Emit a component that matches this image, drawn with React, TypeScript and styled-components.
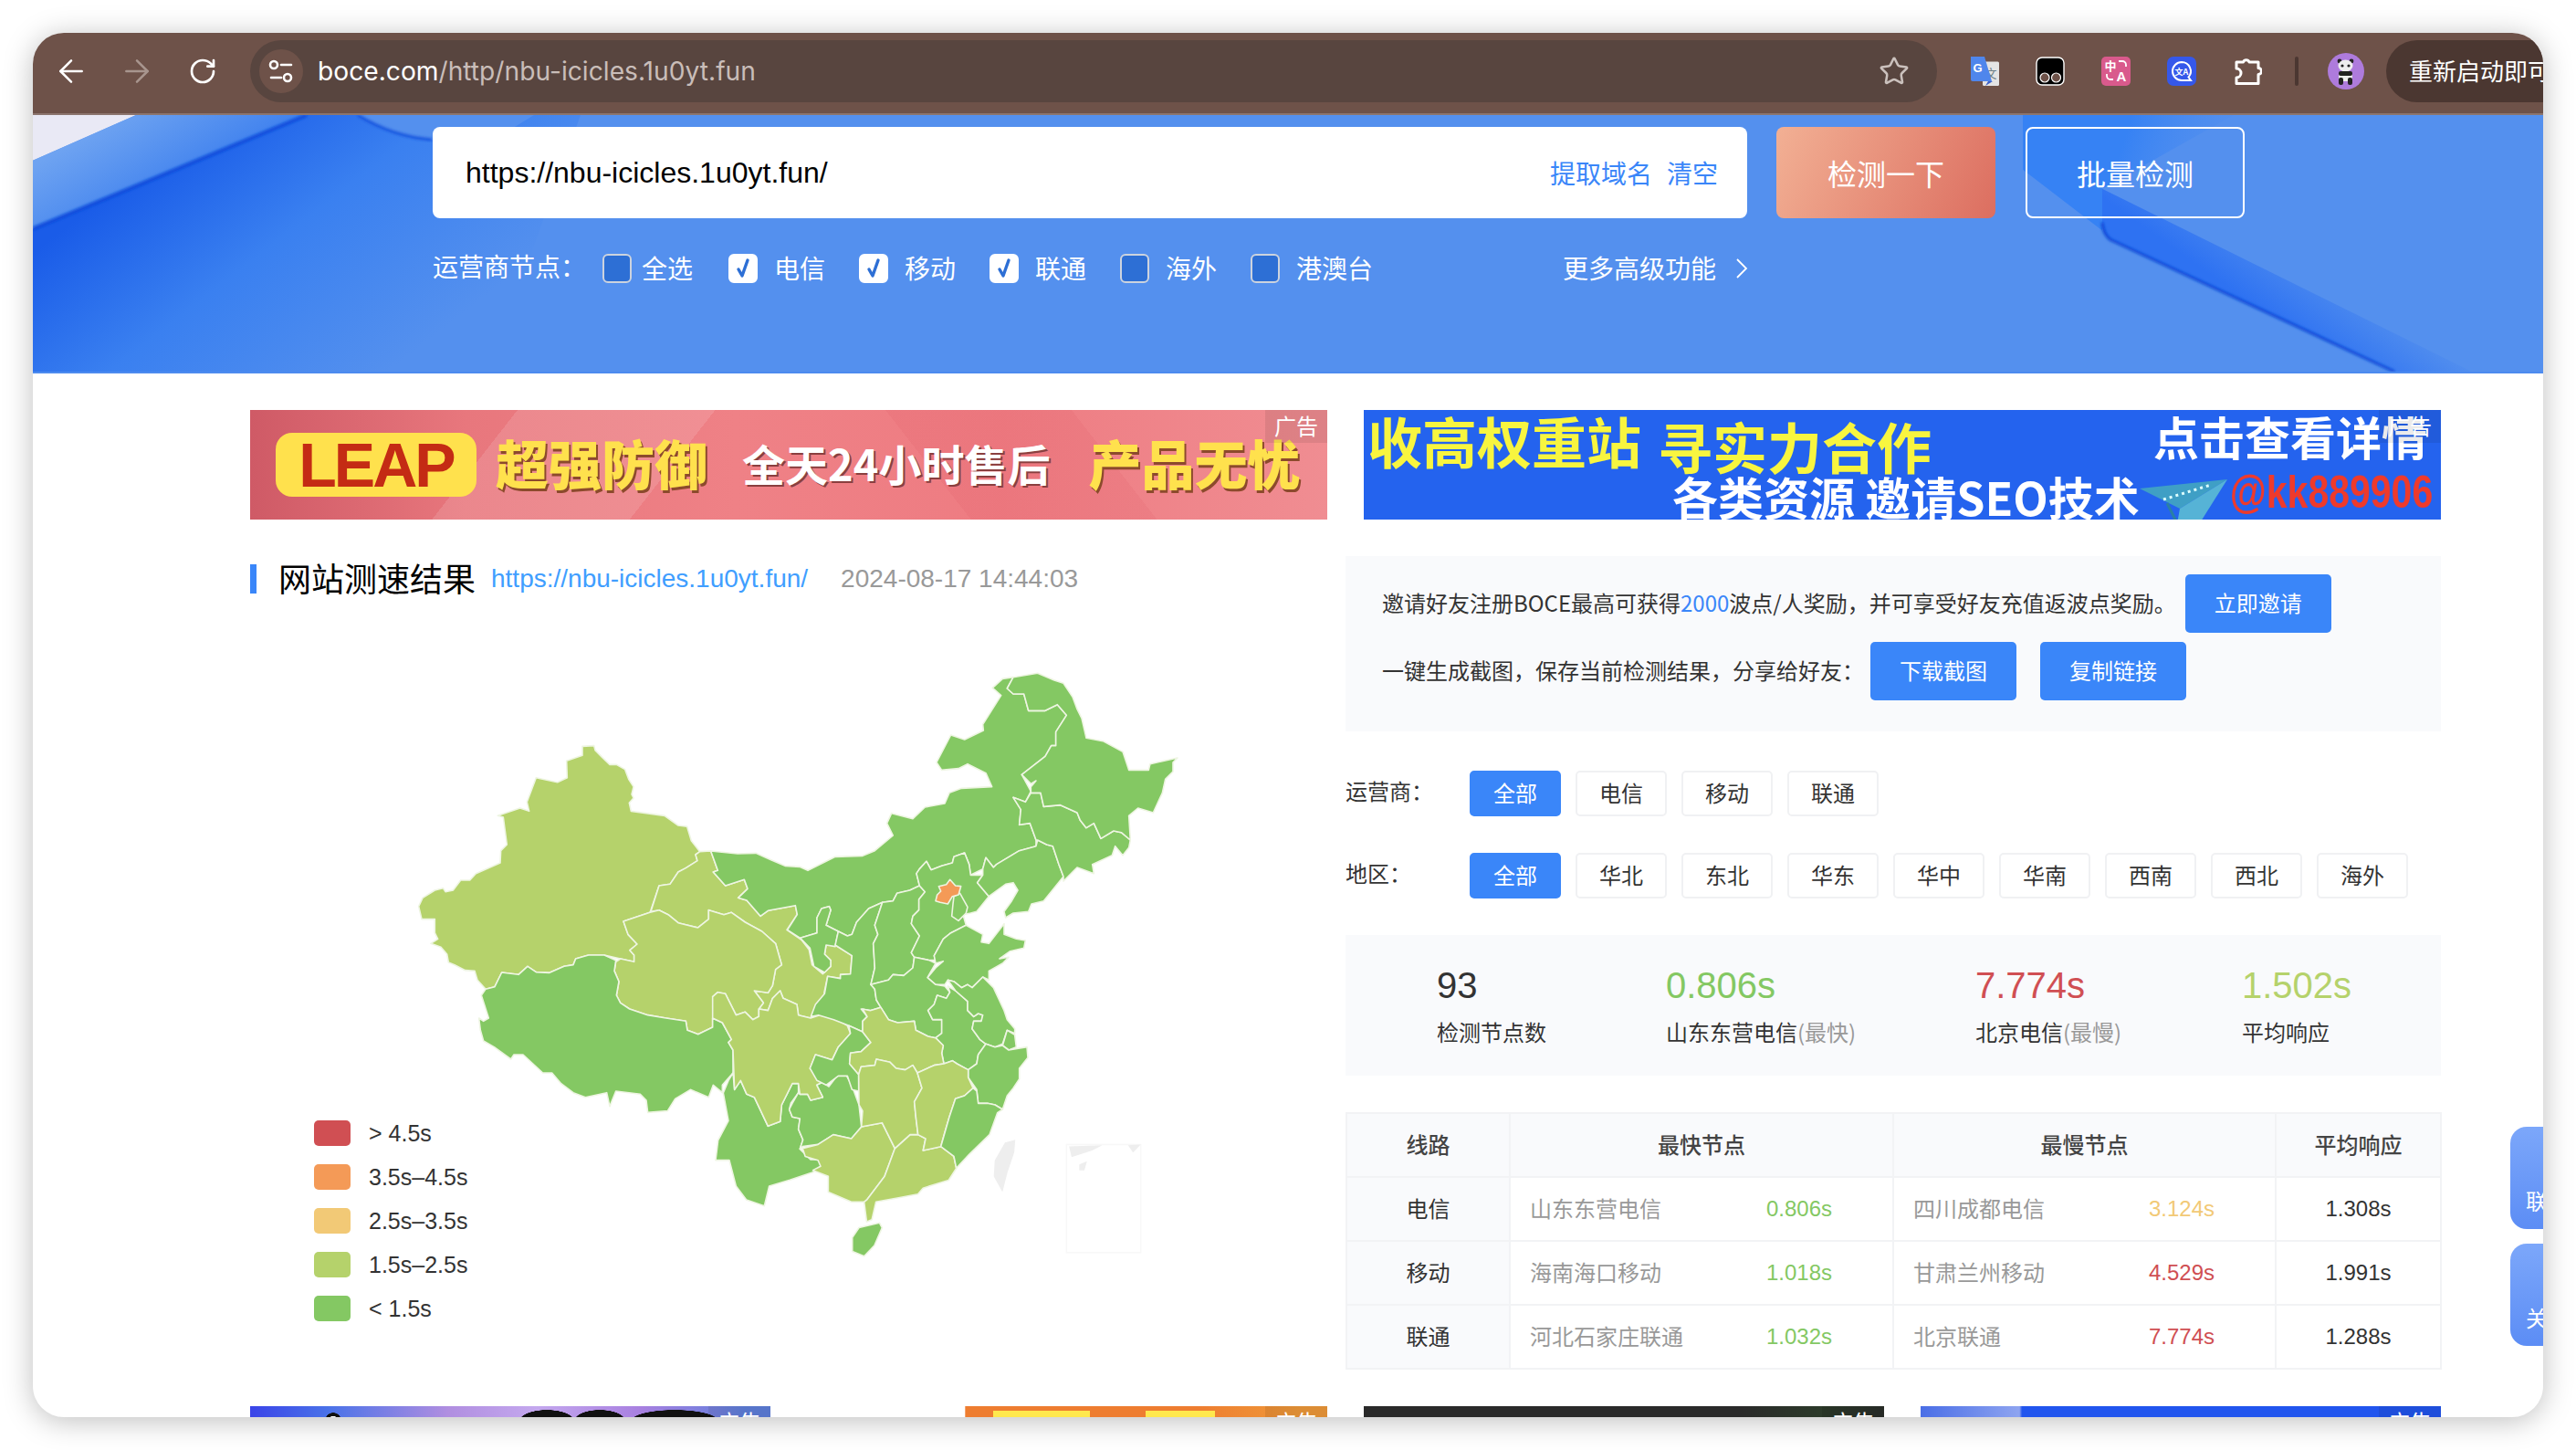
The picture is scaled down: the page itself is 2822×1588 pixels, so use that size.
import React from "react";
import styled, { createGlobalStyle } from "styled-components";
import { ArrowLeft, ArrowRight, RotateCw, Star } from "lucide-react";

const SANS = `"Liberation Sans", "Noto Sans CJK SC", sans-serif`;
const UI = `Inter, "Noto Sans CJK SC", sans-serif`;
const CJK = `"Noto Sans CJK SC", "Liberation Sans", sans-serif`;

const GREEN = "#84c863";
const LIME = "#b5d26b";
const AMBER = "#f2c976";
const ORANGE = "#f49a57";
const RED = "#d04f53";
const BLUE = "#3a86f9";

const Global = createGlobalStyle`
  html, body { margin: 0; padding: 0; background: #fff; overflow: hidden; }
  body { font-family: ${SANS}; }
  * { box-sizing: border-box; }
`;

const Desktop = styled.div`
  width: 2822px;
  height: 1588px;
  padding: 36px;
`;
const Win = styled.div`
  position: relative;
  width: 100%;
  height: 100%;
  border-radius: 34px;
  overflow: hidden;
  background: #fff;
  box-shadow: 0 4px 32px rgba(0, 0, 0, 0.26);
  display: flex;
  flex-direction: column;
`;

/* ---------- browser toolbar ---------- */
const Toolbar = styled.div`
  flex: none;
  height: 90px;
  background: #6e5249;
  border-bottom: 2px solid #8b756e;
  padding: 0 0 4px 6px;
  display: flex;
  align-items: center;
  color: #fff;
`;
const NavCell = styled.div<{ $dim?: boolean }>`
  flex: none;
  width: 72px;
  height: 48px;
  display: flex;
  align-items: center;
  justify-content: center;
  color: ${(p) => (p.$dim ? "#a8958e" : "#fff")};
`;
const Address = styled.div`
  flex: none;
  margin-left: 16px;
  width: 1848px;
  height: 68px;
  border-radius: 34px;
  background: #58453f;
  display: flex;
  align-items: center;
  padding: 0 30px 0 10px;
`;
const Chip = styled.div`
  flex: none;
  width: 48px;
  height: 48px;
  border-radius: 50%;
  background: #6e5249;
`;
const UrlText = styled.div`
  margin-left: 16px;
  font-family: ${UI};
  font-size: 28.2px;
  color: #c9bdb9;
  white-space: nowrap;
`;
const UrlHost = styled.span`
  color: #fff;
`;
const StarWrap = styled.div`
  margin-left: auto;
  color: #cbc1bd;
  display: flex;
`;
const ExtCell = styled.div`
  flex: none;
  width: 72px;
  height: 48px;
  display: flex;
  align-items: center;
  justify-content: center;
`;
const Extensions = styled.div`
  flex: none;
  margin-left: 16px;
  display: flex;
`;
const Sep = styled.div`
  flex: none;
  margin-left: 16px;
  width: 4px;
  height: 32px;
  border-radius: 2px;
  background: #4b3731;
`;
const Avatar = styled.div`
  flex: none;
  margin-left: 32px;
  width: 40px;
  height: 40px;
`;
const Pill = styled.div`
  flex: none;
  margin-left: 24px;
  width: 300px;
  height: 68px;
  border-radius: 34px 0 0 34px;
  background: #4b3731;
  padding: 0 0 3px 25px;
  display: flex;
  align-items: center;
  font-family: ${CJK};
  font-size: 26px;
  color: #fff;
  white-space: nowrap;
`;

/* ---------- hero ---------- */
const Hero = styled.div`
  flex: none;
  position: relative;
  height: 283px;
  background: #5490ee;
  border-bottom: 2px solid #4d8bef;
  overflow: hidden;
`;
const HeroArt = styled.svg`
  position: absolute;
  inset: 0;
  width: 100%;
  height: 100%;
`;
const HeroBody = styled.div`
  position: relative;
  padding: 13px 0 0 438px;
`;
const SearchRow = styled.div`
  display: flex;
  align-items: stretch;
  height: 100px;
`;
const SearchBox = styled.div`
  width: 1440px;
  border-radius: 8px;
  background: #fff;
  padding: 0 32px 0 36px;
  display: flex;
  align-items: center;
  justify-content: space-between;
`;
const SearchText = styled.div`
  font-family: ${SANS};
  font-size: 32px;
  color: #000;
`;
const SearchLinks = styled.div`
  display: flex;
  gap: 16px;
  font-family: ${CJK};
  font-size: 28px;
  color: ${BLUE};
`;
const BaseAction = styled.div`
  width: 240px;
  border-radius: 8px;
  display: flex;
  align-items: center;
  justify-content: center;
  font-family: ${CJK};
  font-size: 32px;
  color: #fff;
`;
const PrimaryAction = styled(BaseAction)`
  margin-left: 32px;
  background: linear-gradient(115deg, #f2b094, #dc6e60);
`;
const GhostAction = styled(BaseAction)`
  margin-left: 33px;
  border: 2px solid #fff;
`;
const OptionRow = styled.div`
  margin-top: 39px;
  height: 32px;
  display: flex;
  align-items: center;
  font-family: ${CJK};
  font-size: 28px;
  color: #fff;
`;
const OptionLabel = styled.div`
  width: 186px;
  flex: none;
  margin-top: -6px;
`;
const OptionList = styled.div`
  display: flex;
  gap: 37px;
`;
const Option = styled.div`
  display: flex;
  align-items: center;
  gap: 18px;
  &:first-child {
    gap: 11px;
    margin-right: 2px;
  }
`;
const OptionText = styled.span`
  margin-top: -3px;
`;
const Box = styled.span<{ $on?: boolean }>`
  flex: none;
  width: 32px;
  height: 32px;
  border-radius: 6px;
  border: 2px solid ${(p) => (p.$on ? "#fff" : "#ccd3de")};
  background: ${(p) => (p.$on ? "#fff" : "#2d6fd5")};
  display: flex;
  align-items: center;
  justify-content: center;
`;
const More = styled.div`
  margin-left: 208px;
  display: flex;
  align-items: center;
  gap: 21px;
`;

/* ---------- page ---------- */
const Content = styled.div`
  flex: 1;
  padding: 40px 0 0 238px;
  overflow: hidden;
`;
const AdRow = styled.div`
  display: flex;
  width: 2400px;
`;
const LeapAd = styled.div`
  position: relative;
  flex: none;
  width: 1180px;
  height: 120px;
  display: flex;
  align-items: center;
  padding-left: 28px;
  font-family: ${CJK};
  overflow: hidden;
  background:
    linear-gradient(128deg, transparent 23%, rgba(255, 255, 255, 0.12) 23%, rgba(255, 255, 255, 0.12) 40%, transparent 40%),
    linear-gradient(52deg, transparent 62%, rgba(214, 70, 85, 0.1) 62%, rgba(214, 70, 85, 0.1) 78%, transparent 78%),
    linear-gradient(90deg, #cf5a66 0%, #e8777d 20%, #ef8186 45%, #ee7c82 70%, #f08d92 100%);
`;
const LeapPill = styled.div`
  flex: none;
  width: 220px;
  height: 70px;
  border-radius: 18px;
  background: #ffe14d;
  display: flex;
  align-items: center;
  justify-content: center;
  font-family: ${SANS};
  font-weight: 700;
  font-size: 68px;
  letter-spacing: -3px;
  color: #c42b14;
`;
const LeapBig = styled.div<{ $ml: number }>`
  flex: none;
  margin: -6px 0 0 ${(p) => p.$ml}px;
  font-size: 58px;
  font-weight: 900;
  line-height: 1;
  color: #ffe14d;
  text-shadow: 2px 3px 0 #8c4a2c;
  white-space: nowrap;
`;
const LeapMid = styled.div`
  flex: none;
  margin: -5px 0 0 38px;
  font-size: 47px;
  font-weight: 700;
  line-height: 1;
  color: #fff;
  text-shadow: 2px 2px 0 #8a3f3f;
  white-space: nowrap;
`;
const AdTag = styled.span`
  position: absolute;
  top: 0;
  right: 0;
  width: 68px;
  height: 36px;
  padding-bottom: 4px;
  background: rgba(0, 0, 0, 0.08);
  display: flex;
  align-items: center;
  justify-content: center;
  font-family: ${CJK};
  font-size: 24px;
  font-weight: 400;
  color: #fff;
  text-shadow: none;
`;
const SeoAd = styled.div`
  position: relative;
  flex: none;
  margin-left: 40px;
  width: 1180px;
  height: 120px;
  background: #2463ee;
  overflow: hidden;
  font-family: ${CJK};
  font-weight: 700;
  display: flex;
  flex-direction: column;
  padding-top: 3px;
`;
const SeoTop = styled.div`
  flex: none;
  height: 66px;
  display: flex;
  align-items: flex-start;
  padding-left: 4px;
  white-space: nowrap;
`;
const SeoYellow = styled.div<{ $ml: number; $mt: number }>`
  margin-left: ${(p) => p.$ml}px;
  margin-top: ${(p) => p.$mt}px;
  font-size: 60px;
  line-height: 1;
  color: #f8f53f;
`;
const SeoWhiteLink = styled.div`
  margin-left: 243px;
  margin-top: 0;
  font-size: 50px;
  line-height: 1;
  color: #fff;
`;
const SeoBottom = styled.div`
  flex: none;
  display: flex;
  align-items: flex-start;
  padding-left: 338px;
  white-space: nowrap;
`;
const SeoWhite = styled.div`
  font-size: 50px;
  line-height: 1;
  color: #fff;
`;
const SeoHandle = styled.div`
  margin: -8px 0 0 3px;
  font-family: ${SANS};
  font-size: 41px;
  line-height: 48px;
  color: #ee3a2c;
  transform: scaleY(1.2);
  transform-origin: top;
`;

const MainGrid = styled.div`
  margin-top: 40px;
  width: 2400px;
  display: flex;
  align-items: flex-start;
  gap: 20px;
`;
const LeftCol = styled.div`
  position: relative;
  flex: none;
  width: 1180px;
`;
const TitleRow = styled.div`
  margin-top: 9px;
  height: 32px;
  display: flex;
  align-items: center;
  white-space: nowrap;
`;
const TitleBar = styled.div`
  flex: none;
  width: 7px;
  height: 32px;
  background: ${BLUE};
`;
const TitleText = styled.div`
  margin: -5px 0 0 24px;
  font-family: ${CJK};
  font-size: 36px;
  color: #000;
`;
const TitleUrl = styled.div`
  margin: -1px 0 0 17px;
  font-size: 28px;
  color: #409eff;
`;
const TitleDate = styled.div`
  margin: -1px 0 0 36px;
  font-size: 28px;
  color: #999;
`;
const MapSvg = styled.svg`
  display: block;
  margin: 70px 0 0 176px;
  width: 880px;
  height: 680px;
`;
const Legend = styled.div`
  position: absolute;
  left: 70px;
  top: 618px;
  display: flex;
  flex-direction: column;
  gap: 20px;
`;
const LegendItem = styled.div`
  height: 28px;
  display: flex;
  align-items: center;
  gap: 20px;
  font-size: 25px;
  color: #333;
`;
const Swatch = styled.span<{ $c: string }>`
  width: 40px;
  height: 28px;
  border-radius: 5px;
  background: ${(p) => p.$c};
`;

const RightCol = styled.div`
  flex: none;
  width: 1200px;
`;
const InviteBox = styled.div`
  height: 192px;
  background: #f9fafc;
  padding: 20px 40px 0;
  display: flex;
  flex-direction: column;
  gap: 10px;
  font-family: ${CJK};
  font-size: 24px;
  color: #333;
`;
const InviteRow = styled.div`
  display: flex;
  align-items: center;
  height: 64px;
  white-space: nowrap;
`;
const InviteText = styled.span`
  margin-top: -4px;
`;
const Hi = styled.span`
  color: ${BLUE};
`;
const BlueBtn = styled.div<{ $ml: number }>`
  flex: none;
  margin-left: ${(p) => p.$ml}px;
  width: 160px;
  height: 64px;
  padding-bottom: 3px;
  border-radius: 5px;
  background: ${BLUE};
  color: #fff;
  display: flex;
  align-items: center;
  justify-content: center;
`;
const FilterRow = styled.div<{ $mt: number }>`
  margin-top: ${(p) => p.$mt}px;
  height: 50px;
  display: flex;
  align-items: center;
  font-family: ${CJK};
  font-size: 24px;
  color: #333;
`;
const FilterLabel = styled.div`
  flex: none;
  width: 136px;
  margin-top: -7px;
`;
const FilterList = styled.div`
  display: flex;
  gap: 16px;
`;
const FilterBtn = styled.div<{ $on?: boolean }>`
  width: 100px;
  height: 50px;
  padding-bottom: 4px;
  border-radius: 5px;
  border: 2px solid ${(p) => (p.$on ? BLUE : "#f0f1f3")};
  background: ${(p) => (p.$on ? BLUE : "#fff")};
  color: ${(p) => (p.$on ? "#fff" : "#333")};
  display: flex;
  align-items: center;
  justify-content: center;
`;
const Stats = styled.div`
  margin-top: 40px;
  height: 154px;
  background: #f9fafc;
  padding: 31px 0 0 100px;
  display: grid;
  grid-template-columns: 251px 339px 292px 1fr;
`;
const StatCol = styled.div`
  display: flex;
  flex-direction: column;
  gap: 11px;
`;
const StatValue = styled.div<{ $c: string }>`
  font-size: 40px;
  line-height: 48px;
  color: ${(p) => p.$c};
`;
const StatLabel = styled.div`
  font-family: ${CJK};
  font-size: 24px;
  line-height: 32px;
  color: #333;
`;
const Muted = styled.span`
  color: #999;
`;
const Table = styled.table`
  margin-top: 40px;
  width: 1199px;
  table-layout: fixed;
  border-collapse: collapse;
  font-family: ${SANS}, ${CJK};
  font-size: 24px;
  color: #333;
`;
const Th = styled.th`
  height: 70px;
  padding: 0 0 4px;
  border: 2px solid #f2f3f5;
  background: #f9fafc;
  font-family: ${CJK};
  font-weight: 500;
  color: #444;
`;
const Td = styled.td`
  height: 70px;
  padding: 0;
  border: 2px solid #f2f3f5;
  text-align: center;
`;
const RowHead = styled(Td)`
  padding-bottom: 3px;
  background: #f9fafc;
  font-family: ${CJK};
`;
const CellRow = styled.div`
  display: flex;
  align-items: center;
  justify-content: space-between;
  padding: 0 66px 0 21px;
`;
const NodeName = styled.span`
  margin-top: -3px;
  font-family: ${CJK};
  color: #999;
`;
const Speed = styled.span<{ $c: string }>`
  color: ${(p) => p.$c};
`;

const BottomAds = styled.div`
  margin-top: 40px;
  width: 2400px;
  display: grid;
  grid-template-columns: 570px 570px 570px 570px;
  column-gap: 40px;
`;
const BottomAd = styled.div<{ $bg: string }>`
  position: relative;
  height: 120px;
  background: ${(p) => p.$bg};
  overflow: hidden;
`;

const SideTab = styled.div<{ $top: number }>`
  position: absolute;
  right: -60px;
  top: ${(p) => p.$top}px;
  width: 96px;
  height: 112px;
  border-radius: 18px 0 0 18px;
  background: linear-gradient(180deg, #7ca7fa, #5c8df5);
  padding: 0 0 16px 17px;
  display: flex;
  align-items: flex-end;
  font-family: ${CJK};
  font-size: 24px;
  line-height: 30px;
  color: #fff;
  white-space: nowrap;
`;

/* ---------- drawings ---------- */
type Prov = { p: string; c: string };
const WEST: Prov[] = [
  { c: LIME, p: "540 52 578 50 582 65 605 88 630 112 652 112 680 128 692 160 708 185 702 210 708 222 694 238 700 265 810 280 855 312 884 316 898 362 926 398 912 408 918 428 880 452 855 465 828 505 792 510 765 590 762 598 675 627 690 670 720 702 696 722 710 738 710 760 665 750 612 738 560 738 518 750 510 770 480 775 432 796 388 794 360 775 330 802 275 795 252 842 222 850 195 820 186 790 155 788 120 770 100 762 95 735 75 712 42 700 65 685 55 665 55 620 12 620 2 578 15 550 55 525 82 518 90 530 115 525 140 492 170 492 190 470 270 435 272 395 292 375 280 285 262 280 335 255 365 265 358 235 388 155 458 170 490 155 488 100 540 82" },
  { c: LIME, p: "926 398 962 396 985 460 970 465 1010 510 1072 490 1083 520 1052 550 1080 558 1125 610 1150 592 1240 575 1246 604 1212 655 1260 688 1285 720 1295 770 1330 800 1356 775 1356 755 1336 735 1341 705 1371 705 1426 740 1421 800 1388 802 1388 815 1346 808 1335 860 1335 885 1310 925 1290 945 1250 935 1245 900 1200 880 1190 855 1165 880 1150 920 1120 915 1135 895 1105 855 1150 862 1165 838 1175 785 1195 770 1175 700 1130 660 1075 630 1030 598 1005 605 955 590 955 620 920 648 855 632 822 605 792 590 765 595 792 510 828 505 855 465 880 452 918 428 912 408" },
  { c: LIME, p: "675 627 762 598 792 590 822 605 855 632 920 648 955 620 955 590 1005 605 1030 598 1075 630 1130 660 1175 700 1195 770 1175 785 1165 838 1150 862 1105 855 1135 895 1120 915 1120 940 1100 950 1075 925 1045 935 1010 865 985 860 968 875 980 905 968 945 968 975 920 998 885 985 880 955 815 945 755 935 695 915 665 895 652 870 660 825 645 790 650 760 665 750 710 760 710 738 696 722 720 702 690 670" },
  { c: GREEN, p: "222 850 252 842 275 795 330 802 360 775 388 794 432 796 480 775 510 770 518 750 560 738 612 738 650 755 645 790 660 825 652 870 665 895 695 915 755 935 815 945 880 955 885 985 920 998 968 975 968 945 1000 960 1030 1015 1020 1025 1035 1050 1035 1125 1000 1165 1000 1190 970 1165 955 1205 895 1180 845 1210 820 1250 755 1255 750 1215 730 1195 650 1185 630 1235 620 1190 550 1205 510 1190 470 1160 440 1125 410 1125 345 1065 315 1065 305 1080 250 1040 215 1020 205 985 200 945 215 955 232 945 208 870" },
  { c: GREEN, p: "1035 1125 1040 1180 1060 1150 1080 1195 1105 1205 1150 1300 1190 1285 1195 1230 1230 1160 1250 1160 1250 1190 1225 1225 1220 1245 1230 1270 1255 1275 1250 1310 1265 1345 1255 1375 1290 1410 1320 1410 1323 1432 1298 1451 1222 1477 1154 1497 1138 1562 1079 1542 1045 1497 1023 1412 978 1412 986 1347 1020 1282 1003 1191 1020 1150" },
  { c: GREEN, p: "1230 1225 1250 1190 1255 1195 1280 1195 1290 1215 1330 1205 1310 1165 1330 1155 1350 1170 1380 1130 1407 1132 1425 1165 1449 1230 1457 1302 1424 1341 1365 1328 1314 1360 1264 1367 1255 1375 1265 1345 1250 1310 1255 1275 1230 1270 1220 1245" },
  { c: LIME, p: "968 945 968 875 985 860 1010 865 1045 935 1075 925 1100 950 1120 940 1120 915 1150 920 1165 880 1190 855 1200 880 1245 900 1250 935 1290 945 1320 935 1370 945 1411 970 1421 995 1381 1040 1361 1082 1306 1065 1288 1110 1305 1130 1330 1155 1310 1165 1330 1205 1290 1215 1280 1195 1255 1195 1250 1160 1230 1160 1195 1230 1190 1285 1150 1300 1105 1205 1080 1195 1060 1150 1040 1180 1035 1050 1020 1025 1030 1015 1000 960" },
];
const EAST: Prov[] = [
  { c: GREEN, p: "-214 606 -126 615 -66 613 -16 635 30 655 78 658 105 670 195 625 285 622 325 605 385 555 365 515 380 482 450 500 490 462 555 450 570 415 610 400 710 395 690 350 630 320 600 335 545 340 528 315 575 225 620 240 682 210 680 190 740 95 712 70 745 40 780 35 760 72 780 90 815 90 830 145 885 145 925 125 955 160 920 215 920 260 905 260 885 295 808 355 838 410 820 445 780 430 805 470 800 520 835 515 855 570 855 590 800 605 725 650 715 660 690 628 680 665 640 685 635 650 620 612 585 625 580 645 545 655 510 668 495 640 472 665 462 680 472 720 440 735 398 745 385 770 350 775 305 795 265 840 250 880 235 885 205 870 165 850 180 800 175 788 150 795 135 825 135 875 80 892 38 865 70 815 64 785 -26 802 -51 820 -96 768 -124 760 -93 730 -104 700 -166 720 -206 675 -191 670" },
  { c: GREEN, p: "80 892 135 875 135 825 150 795 175 788 180 800 165 850 205 870 195 920 165 915 160 945 180 965 180 985 160 1005 125 985 112 925" },
  { c: GREEN, p: "205 870 235 885 250 880 265 840 305 795 350 775 325 850 335 880 320 910 325 990 312 1045 325 1060 330 1095 345 1120 310 1130 280 1125 300 1150 285 1165 285 1200 240 1180 190 1160 140 1145 115 1150 130 1110 160 1075 170 1018 212 1025 212 1012 245 1010 250 950 195 915" },
  { c: GREEN, p: "350 775 385 770 398 745 440 735 472 720 490 740 470 765 470 800 450 820 445 845 472 885 445 940 455 955 450 990 420 1015 385 1012 370 1030 312 1045 325 990 320 910 335 880 325 850" },
  { c: GREEN, p: "472 665 495 640 510 668 545 655 580 645 585 625 620 612 635 650 640 685 680 685 662 710 700 755 660 805 640 810 615 815 625 850 575 875 550 895 520 950 525 965 505 965 455 955 445 940 472 885 445 845 450 820 470 800 470 765 490 740 472 720 462 680" },
  { c: GREEN, p: "585 755 605 745 630 790 625 810 600 835 578 820 582 780" },
  { c: ORANGE, p: "572 700 590 720 608 722 600 750 580 755 565 780 540 775 525 770 530 750 542 738 535 722 560 716" },
  { c: GREEN, p: "680 665 690 628 715 660 725 650 800 605 855 590 860 570 890 585 910 590 930 650 945 690 880 770 840 780 830 805 780 810 755 825 750 805 775 770 795 735 780 710 755 715 700 755 662 710 680 685" },
  { c: GREEN, p: "780 430 820 445 838 415 870 415 880 460 935 455 990 480 1000 505 1020 530 1045 515 1068 565 1110 540 1135 545 1165 570 1160 595 1140 620 1115 590 1105 620 1040 650 1045 680 990 660 945 705 945 690 930 650 910 590 890 585 860 570 855 570 835 515 800 520 805 470" },
  { c: GREEN, p: "780 35 860 22 915 45 945 55 975 100 990 140 1005 170 1020 235 1075 245 1140 280 1160 340 1225 340 1230 320 1320 300 1305 315 1305 345 1280 370 1270 415 1240 480 1190 465 1160 490 1165 570 1135 545 1110 540 1068 565 1045 515 1020 530 1000 505 990 480 935 455 880 460 870 415 838 415 838 395 855 375 838 385 808 355 885 295 905 260 920 260 920 215 955 160 925 125 885 145 830 145 815 90 780 90 760 72" },
  { c: GREEN, p: "520 950 550 895 575 875 625 850 680 880 675 905 700 910 750 845 750 880 790 895 820 900 815 925 770 935 735 960 765 955 745 975 700 1000 700 1030 680 1020 645 1055 630 1045 610 1055 585 1035 565 1030 555 1045 525 1045 498 1022 525 990 550 968 525 975" },
  { c: GREEN, p: "312 1045 370 1030 385 1012 420 1015 450 990 455 955 505 965 525 975 498 1022 525 1045 555 1050 572 1070 560 1090 530 1080 520 1110 500 1130 515 1160 545 1160 545 1205 525 1220 500 1215 460 1195 455 1165 400 1170 370 1160 345 1120 330 1095 325 1060" },
  { c: GREEN, p: "520 1110 530 1080 560 1090 572 1070 565 1050 590 1065 630 1100 630 1130 650 1150 665 1140 680 1145 675 1165 650 1165 645 1190 670 1225 690 1240 665 1275 660 1305 632 1325 595 1305 580 1295 552 1305 545 1270 550 1245 525 1220 545 1205 545 1160 515 1160 500 1130" },
  { c: GREEN, p: "565 1030 585 1035 610 1055 630 1045 645 1055 680 1020 715 1055 750 1130 760 1160 785 1190 785 1205 760 1195 745 1240 720 1250 690 1240 670 1225 645 1190 650 1165 675 1165 680 1145 665 1140 650 1150 630 1130 630 1100 590 1065" },
  { c: GREEN, p: "760 1195 785 1210 790 1250 765 1260 745 1245" },
  { c: GREEN, p: "690 1240 720 1250 745 1245 765 1260 825 1250 828 1285 800 1320 800 1355 780 1385 760 1410 745 1455 720 1440 695 1435 665 1435 660 1390 632 1350 632 1325 660 1305 665 1275" },
  { c: GREEN, p: "245 1205 240 1180 285 1200 312 1235 280 1265 245 1270 242 1305 272 1340 272 1395 250 1390 235 1345 205 1345 165 1375 135 1360 112 1320 130 1275 185 1292 205 1250" },
  { c: LIME, p: "285 1125 310 1130 345 1120 370 1160 400 1170 455 1165 460 1195 500 1215 525 1220 550 1245 545 1270 552 1305 520 1310 465 1335 450 1310 425 1325 395 1320 375 1300 330 1290 325 1310 280 1315 272 1340 242 1305 245 1270 280 1265 312 1235 285 1200 285 1165 300 1150" },
  { c: LIME, p: "280 1315 325 1310 330 1290 375 1300 395 1320 425 1325 450 1310 465 1335 480 1385 455 1430 460 1480 467 1538 441 1538 391 1583 349 1499 281 1512 285 1460 273 1440 272 1340" },
  { c: LIME, p: "465 1335 520 1310 552 1305 580 1295 595 1305 632 1325 632 1350 648 1385 620 1410 590 1420 570 1480 555 1530 542 1577 484 1590 492 1551 467 1538 460 1480 455 1430 480 1385" },
  { c: GREEN, p: "648 1385 660 1395 665 1435 695 1435 720 1440 745 1455 728 1466 702 1538 635 1603 593 1648 585 1609 542 1577 559 1518 570 1480 590 1420 620 1410" },
];
const SOUTH: Prov[] = [
  { c: LIME, p: "765 1240 795 1230 825 1205 860 1215 880 1185 920 1175 945 1240 925 1310 890 1370 885 1375 860 1375 815 1350 815 1310 785 1295 800 1285 795 1270 770 1260" },
  { c: LIME, p: "945 1240 975 1205 990 1205 1005 1215 1000 1245 1035 1235 1060 1260 1065 1290 1050 1320 1000 1340 990 1355 950 1365 908 1375 900 1420 890 1425 885 1375 890 1370 925 1310" },
  { c: GREEN, p: "875 1440 915 1428 920 1440 905 1485 885 1512 862 1500 862 1465" },
];

const ChinaMap = () => (
  <MapSvg viewBox="450 720 880 680" aria-hidden>
    <g transform="translate(450 720) scale(0.5612 0.4337)" fill="#eeeeee">
      <polygon points="1160 1225 1180 1218 1178 1250 1165 1300 1155 1350 1138 1310 1140 1270" />
      <rect x="1280" y="1230" width="145" height="273" fill="none" stroke="#f8f8f8" strokeWidth="1.5" vectorEffect="non-scaling-stroke" />
      <polygon points="1285 1235 1350 1232 1330 1245 1290 1262" />
      <polygon points="1400 1232 1425 1230 1410 1250" />
      <polygon points="1305 1280 1320 1272 1315 1295 1305 1295" />
    </g>
    <g stroke="#eef5e2" strokeWidth="1.6" strokeLinejoin="round">
      <g transform="translate(458 800) scale(0.33333)">
        {WEST.map((v, i) => <polygon key={i} points={v.p} fill={v.c} vectorEffect="non-scaling-stroke" />)}
      </g>
      <g transform="translate(450 720) scale(0.5612 0.4337)">
        {SOUTH.map((v, i) => <polygon key={i} points={v.p} fill={v.c} vectorEffect="non-scaling-stroke" />)}
      </g>
      <g transform="translate(850 730) scale(0.33333)">
        {EAST.map((v, i) => <polygon key={i} points={v.p} fill={v.c} vectorEffect="non-scaling-stroke" />)}
      </g>
    </g>
  </MapSvg>
);

const HeroDrawing = () => (
  <HeroArt viewBox="0 0 2750 282" preserveAspectRatio="none" aria-hidden>
    <defs>
      <linearGradient id="deep" gradientUnits="userSpaceOnUse" x1="130" y1="50" x2="340" y2="320">
        <stop offset="0" stopColor="#1a5ce8" />
        <stop offset="0.45" stopColor="#3a80f0" />
        <stop offset="1" stopColor="#5490ee" />
      </linearGradient>
      <linearGradient id="band" gradientUnits="userSpaceOnUse" x1="60" y1="20" x2="120" y2="120">
        <stop offset="0" stopColor="#6ea3f1" />
        <stop offset="1" stopColor="#3b7eee" />
      </linearGradient>
      <linearGradient id="slash" gradientUnits="userSpaceOnUse" x1="2420" y1="200" x2="2470" y2="130">
        <stop offset="0" stopColor="#2e72f2" />
        <stop offset="1" stopColor="#5490ee" />
      </linearGradient>
      <linearGradient id="wedge" gradientUnits="userSpaceOnUse" x1="2290" y1="30" x2="2380" y2="60">
        <stop offset="0" stopColor="#3682f4" />
        <stop offset="1" stopColor="#4a8bf0" stopOpacity="0.3" />
      </linearGradient>
      <filter id="soft" x="-10%" y="-10%" width="120%" height="120%">
        <feGaussianBlur stdDeviation="1.6" />
      </filter>
    </defs>
    <path d="M0 125 L300 0 L356 0 Q395 24 437 27 L505 27 L549 0 L600 0 L500 282 L0 282 Z" fill="url(#deep)" />
    <polygon points="0 0 113 0 0 50" fill="#e9e9f5" />
    <polygon points="113 0 300 0 0 125 0 50" fill="url(#band)" />
    <path d="M300 0 L0 125" stroke="#0d4bdb" strokeWidth="4" fill="none" filter="url(#soft)" />
    <path d="M356 0 Q395 24 437 27" stroke="#1352dd" strokeWidth="3" fill="none" filter="url(#soft)" />
    <polygon points="2180 0 2411 0 2267 81 2267 127 2180 60" fill="url(#wedge)" />
    <path d="M2267 81 L2672 282 L2587 282 L2276 137 Q2267 131 2267 118 Z" fill="url(#slash)" />
    <path d="M2267 118 Q2268 131 2276 137 L2587 282" stroke="#0b47d6" strokeWidth="3" fill="none" filter="url(#soft)" />
  </HeroArt>
);

const TuneIcon = () => (
  <svg width="48" height="48" viewBox="0 0 48 48" fill="none" stroke="#fff" strokeWidth="2.6" strokeLinecap="round">
    <circle cx="16" cy="17" r="4" />
    <path d="M24 17h11M13 31h11" />
    <circle cx="31" cy="31" r="4" />
  </svg>
);
const TranslateIcon = () => (
  <svg width="32" height="32" viewBox="0 0 32 32">
    <rect x="14" y="5.500" width="18" height="26.500" rx="1.500" fill="#e4e4e4" />
    <text x="23" y="23" textAnchor="middle" fontSize="13" fill="#6b7f86" fontFamily="Noto Sans CJK SC, sans-serif">文</text>
    <path d="M1 0h15l8 27H3a2 2 0 0 1-2-2z" fill="#4f86ec" />
    <path d="M20 27l-3 5 8-5z" fill="#3a5fc8" />
    <text x="8.500" y="17" textAnchor="middle" fontSize="13" fontWeight="700" fill="#fff" fontFamily="Liberation Sans, sans-serif">G</text>
  </svg>
);
const EyesIcon = () => (
  <svg width="32" height="32" viewBox="0 0 32 32">
    <rect x="1" y="1" width="30" height="30" rx="6" fill="#000" stroke="#fff" strokeWidth="1.4" />
    <circle cx="10" cy="23" r="5" fill="#6e5249" stroke="#fff" strokeWidth="1.200" />
    <circle cx="22.500" cy="23" r="5" fill="#6e5249" stroke="#fff" strokeWidth="1.200" />
  </svg>
);
const PinkIcon = () => (
  <svg width="32" height="32" viewBox="0 0 32 32">
    <rect width="32" height="32" rx="5" fill="#d95a8c" />
    <text x="10" y="15" textAnchor="middle" fontSize="13" fontWeight="700" fill="#fff" fontFamily="Noto Sans CJK SC, sans-serif">中</text>
    <text x="22" y="27" textAnchor="middle" fontSize="15" fontWeight="700" fill="#fff" fontFamily="Liberation Sans, sans-serif">A</text>
    <path d="M19 5h4a4 4 0 0 1 4 4v2M6 19v2a4 4 0 0 0 4 4h3" stroke="#fff" strokeWidth="1.800" fill="none" />
  </svg>
);
const BubbleIcon = () => (
  <svg width="32" height="32" viewBox="0 0 32 32">
    <rect width="32" height="32" rx="7" fill="#3558ea" />
    <path d="M16 6a10 10 0 1 0 0 20h10l-2.500-3.500A10 10 0 0 0 16 6z" fill="none" stroke="#fff" strokeWidth="2" />
    <text x="16" y="20" textAnchor="middle" fontSize="9" fontWeight="700" fill="#fff" fontFamily="Noto Sans CJK SC, sans-serif">文A</text>
  </svg>
);
const PuzzleIcon = () => (
  <svg width="32" height="32" viewBox="0 0 32 32" fill="none" stroke="#fff" strokeWidth="3" strokeLinejoin="round">
    <path d="M4 6H11.500a3.500 3.500 0 0 1 6.500 0H28V12.500a3.500 3.500 0 0 1 0 7V29.500H4V23a4.500 4.500 0 0 0 0-10z" />
  </svg>
);
const PandaIcon = () => (
  <svg width="40" height="40" viewBox="0 0 40 40">
    <circle cx="20" cy="20" r="20" fill="#ae7bdc" />
    <circle cx="13" cy="9" r="2.400" fill="#222" />
    <circle cx="26" cy="9" r="2.400" fill="#222" />
    <ellipse cx="19.500" cy="14" rx="8" ry="6.500" fill="#eee" />
    <circle cx="16" cy="14" r="1.600" fill="#222" />
    <circle cx="23" cy="14" r="1.600" fill="#222" />
    <rect x="12" y="20" width="15" height="11" rx="4" fill="#eee" />
    <rect x="12" y="20" width="15" height="5" rx="2" fill="#222" />
    <rect x="12" y="27" width="5" height="8" rx="2" fill="#222" />
    <rect x="22" y="27" width="5" height="8" rx="2" fill="#222" />
  </svg>
);
const Check = () => (
  <svg width="24" height="26" viewBox="0 0 24 26" fill="none" stroke="#2d6fd5" strokeWidth="3.400" strokeLinecap="round" strokeLinejoin="round">
    <path d="M7 14l4 7 6-17" />
  </svg>
);
const Chevron = () => (
  <svg width="14" height="22" viewBox="0 0 14 22" fill="none" stroke="#fff" strokeWidth="1.800">
    <path d="M2 1l10 10L2 21" />
  </svg>
);
const Plane = () => (
  <svg width="96" height="56" viewBox="0 0 96 56" style={{ flex: "none", marginTop: 5 }}>
    <polygon points="0 12 96 2 44 34" fill="#3f9fc5" />
    <polygon points="44 34 96 2 62 56 40 56" fill="#56b3d6" />
    <path d="M26 24L78 8" stroke="#dff" strokeWidth="3" strokeDasharray="3 4" />
    <path d="M30 28l14 28" stroke="#2a80a5" strokeWidth="3" />
  </svg>
);

const OPTS: [string, boolean][] = [["全选", false], ["电信", true], ["移动", true], ["联通", true], ["海外", false], ["港澳台", false]];
const LEGEND: [string, string][] = [[RED, "> 4.5s"], [ORANGE, "3.5s–4.5s"], [AMBER, "2.5s–3.5s"], [LIME, "1.5s–2.5s"], [GREEN, "< 1.5s"]];
const REGIONS = ["全部", "华北", "东北", "华东", "华中", "华南", "西南", "西北", "海外"];
const CARRIERS = ["全部", "电信", "移动", "联通"];
const ROWS = [
  { l: "电信", f: "山东东营电信", fv: "0.806s", fc: GREEN, s: "四川成都电信", sv: "3.124s", sc: AMBER, a: "1.308s" },
  { l: "移动", f: "海南海口移动", fv: "1.018s", fc: GREEN, s: "甘肃兰州移动", sv: "4.529s", sc: RED, a: "1.991s" },
  { l: "联通", f: "河北石家庄联通", fv: "1.032s", fc: GREEN, s: "北京联通", sv: "7.774s", sc: RED, a: "1.288s" },
];
const BOTTOM_ADS = [
  "radial-gradient(circle 9px at 91px 16px, #fff 55%, #111 60%, #111 95%, transparent 100%), radial-gradient(ellipse 30px 12px at 325px 16px, #111 97%, transparent 100%), radial-gradient(ellipse 28px 12px at 383px 16px, #111 97%, transparent 100%), radial-gradient(ellipse 48px 12px at 465px 16px, #111 97%, transparent 100%), linear-gradient(90deg, #3a44e8, #4a72e8 15%, #b08ee0 38%, #c4a8ee 55%, #a880e0 75%, #5f7fdc 95%)",
  "linear-gradient(#ffe84d, #ffe84d) 204px 5px / 106px 20px no-repeat, linear-gradient(#ffe84d, #ffe84d) 371px 5px / 76px 20px no-repeat, linear-gradient(90deg, #fff 30.3%, #ee7d30 30.5%, #ee7d30 75%, #ef9a3a 95%)",
  "linear-gradient(100deg, #2a2a2a 70%, #2c3a2a 85%, #2a2a2a)",
  "linear-gradient(90deg, #4a6ee6, #8ea4f0 19%, #2155ee 19.5%, #2155ee)",
];

export default function App() {
  return (
    <Desktop>
      <Global />
      <Win>
        <Toolbar>
          <NavCell><ArrowLeft size={40} strokeWidth={1.5} /></NavCell>
          <NavCell $dim><ArrowRight size={40} strokeWidth={1.5} /></NavCell>
          <NavCell><RotateCw size={32} strokeWidth={2} /></NavCell>
          <Address>
            <Chip><TuneIcon /></Chip>
            <UrlText><UrlHost>boce.com</UrlHost>/http/nbu-icicles.1u0yt.fun</UrlText>
            <StarWrap><Star size={34} strokeWidth={1.8} /></StarWrap>
          </Address>
          <Extensions>
            <ExtCell><TranslateIcon /></ExtCell>
            <ExtCell><EyesIcon /></ExtCell>
            <ExtCell><PinkIcon /></ExtCell>
            <ExtCell><BubbleIcon /></ExtCell>
            <ExtCell><PuzzleIcon /></ExtCell>
          </Extensions>
          <Sep />
          <Avatar><PandaIcon /></Avatar>
          <Pill>重新启动即可更新</Pill>
        </Toolbar>

        <Hero>
          <HeroDrawing />
          <HeroBody>
            <SearchRow>
              <SearchBox>
                <SearchText>https://nbu-icicles.1u0yt.fun/</SearchText>
                <SearchLinks><span>提取域名</span><span>清空</span></SearchLinks>
              </SearchBox>
              <PrimaryAction>检测一下</PrimaryAction>
              <GhostAction>批量检测</GhostAction>
            </SearchRow>
            <OptionRow>
              <OptionLabel>运营商节点：</OptionLabel>
              <OptionList>
                {OPTS.map(([t, on]) => (
                  <Option key={t}>
                    <Box $on={on}>{on && <Check />}</Box>
                    <OptionText>{t}</OptionText>
                  </Option>
                ))}
              </OptionList>
              <More><OptionText>更多高级功能</OptionText><Chevron /></More>
            </OptionRow>
          </HeroBody>
        </Hero>

        <Content>
          <AdRow>
            <LeapAd>
              <LeapPill>LEAP</LeapPill>
              <LeapBig $ml={21}>超强防御</LeapBig>
              <LeapMid>全天24小时售后</LeapMid>
              <LeapBig $ml={42}>产品无忧</LeapBig>
              <AdTag>广告</AdTag>
            </LeapAd>
            <SeoAd>
              <SeoTop>
                <SeoYellow $ml={0} $mt={0}>收高权重站</SeoYellow>
                <SeoYellow $ml={18} $mt={6}>寻实力合作</SeoYellow>
                <SeoWhiteLink>点击查看详情</SeoWhiteLink>
              </SeoTop>
              <SeoBottom>
                <SeoWhite>各类资源 邀请SEO技术</SeoWhite>
                <Plane />
                <SeoHandle>@kk889906</SeoHandle>
              </SeoBottom>
              <AdTag>广告</AdTag>
            </SeoAd>
          </AdRow>

          <MainGrid>
            <LeftCol>
              <TitleRow>
                <TitleBar />
                <TitleText>网站测速结果</TitleText>
                <TitleUrl>https://nbu-icicles.1u0yt.fun/</TitleUrl>
                <TitleDate>2024-08-17 14:44:03</TitleDate>
              </TitleRow>
              <ChinaMap />
              <Legend>
                {LEGEND.map(([c, t]) => (
                  <LegendItem key={t}><Swatch $c={c} />{t}</LegendItem>
                ))}
              </Legend>
            </LeftCol>

            <RightCol>
              <InviteBox>
                <InviteRow>
                  <InviteText>邀请好友注册BOCE最高可获得<Hi>2000</Hi>波点/人奖励，并可享受好友充值返波点奖励。</InviteText>
                  <BlueBtn $ml={10}>立即邀请</BlueBtn>
                </InviteRow>
                <InviteRow>
                  <InviteText>一键生成截图，保存当前检测结果，分享给好友：</InviteText>
                  <BlueBtn $ml={7}>下载截图</BlueBtn>
                  <BlueBtn $ml={26}>复制链接</BlueBtn>
                </InviteRow>
              </InviteBox>
              <FilterRow $mt={43}>
                <FilterLabel>运营商：</FilterLabel>
                <FilterList>
                  {CARRIERS.map((t, i) => <FilterBtn key={t} $on={i === 0}>{t}</FilterBtn>)}
                </FilterList>
              </FilterRow>
              <FilterRow $mt={40}>
                <FilterLabel>地区：</FilterLabel>
                <FilterList>
                  {REGIONS.map((t, i) => <FilterBtn key={t} $on={i === 0}>{t}</FilterBtn>)}
                </FilterList>
              </FilterRow>
              <Stats>
                <StatCol><StatValue $c="#333">93</StatValue><StatLabel>检测节点数</StatLabel></StatCol>
                <StatCol><StatValue $c={GREEN}>0.806s</StatValue><StatLabel>山东东营电信<Muted>(最快)</Muted></StatLabel></StatCol>
                <StatCol><StatValue $c={RED}>7.774s</StatValue><StatLabel>北京电信<Muted>(最慢)</Muted></StatLabel></StatCol>
                <StatCol><StatValue $c={LIME}>1.502s</StatValue><StatLabel>平均响应</StatLabel></StatCol>
              </Stats>
              <Table>
                <colgroup>
                  <col width="179" /><col width="420" /><col width="419" /><col width="181" />
                </colgroup>
                <thead>
                  <tr><Th>线路</Th><Th>最快节点</Th><Th>最慢节点</Th><Th>平均响应</Th></tr>
                </thead>
                <tbody>
                  {ROWS.map((r) => (
                    <tr key={r.l}>
                      <RowHead>{r.l}</RowHead>
                      <Td><CellRow><NodeName>{r.f}</NodeName><Speed $c={r.fc}>{r.fv}</Speed></CellRow></Td>
                      <Td><CellRow><NodeName>{r.s}</NodeName><Speed $c={r.sc}>{r.sv}</Speed></CellRow></Td>
                      <Td>{r.a}</Td>
                    </tr>
                  ))}
                </tbody>
              </Table>
            </RightCol>
          </MainGrid>

          <BottomAds>
            {BOTTOM_ADS.map((bg, i) => (
              <BottomAd key={i} $bg={bg}><AdTag>广告</AdTag></BottomAd>
            ))}
          </BottomAds>
        </Content>

        <SideTab $top={1198}>联系我们</SideTab>
        <SideTab $top={1326}>关注我们</SideTab>
      </Win>
    </Desktop>
  );
}
